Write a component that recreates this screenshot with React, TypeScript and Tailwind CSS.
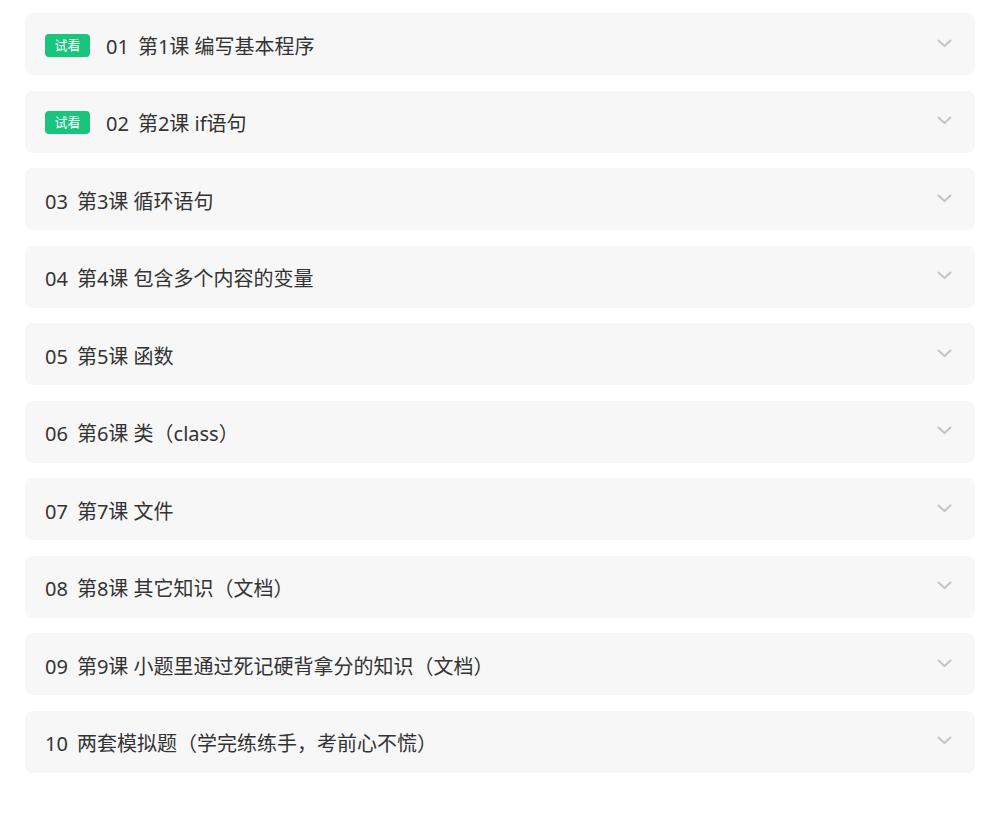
import React from "react";

const items: { n: string; t: string; trial?: boolean }[] = [
  { n: "01", t: "第1课 编写基本程序", trial: true },
  { n: "02", t: "第2课 if语句", trial: true },
  { n: "03", t: "第3课 循环语句" },
  { n: "04", t: "第4课 包含多个内容的变量" },
  { n: "05", t: "第5课 函数" },
  { n: "06", t: "第6课 类（class）" },
  { n: "07", t: "第7课 文件" },
  { n: "08", t: "第8课 其它知识（文档）" },
  { n: "09", t: "第9课 小题里通过死记硬背拿分的知识（文档）" },
  { n: "10", t: "两套模拟题（学完练练手，考前心不慌）" },
];

export default function App() {
  return (
    <div
      className="w-[1001px] h-[818px] bg-white px-[25px] pt-[13px] flex flex-col gap-[15.5px]"
      style={{ fontFamily: '"Noto Sans", "Noto Sans CJK SC", sans-serif' }}
    >
      {items.map((it) => (
        <div
          key={it.n}
          className="h-[62px] w-[950px] shrink-0 rounded-[8px] bg-[#f7f7f7] flex items-center pl-[20px] pr-[23px]"
        >
          {it.trial && (
            <span className="mr-[16px] mt-[2px] flex h-[23px] w-[45px] items-center justify-center rounded-[4px] bg-[#19c47d] text-[13px] leading-none text-white">
              试看
            </span>
          )}
          <span className="flex-1 text-[20px] leading-none text-[#333333] pt-[5px]">
            <span className="mr-[9px]">{it.n}</span>
            {it.t}
          </span>
          <svg width="15" height="9" viewBox="0 0 15 9" className="mb-[2px]">
            <path d="M1.5 1.5 L7.5 7 L13.5 1.5" fill="none" stroke="#c4c4c4" strokeWidth="2" strokeLinecap="round" strokeLinejoin="round" />
          </svg>
        </div>
      ))}
    </div>
  );
}
